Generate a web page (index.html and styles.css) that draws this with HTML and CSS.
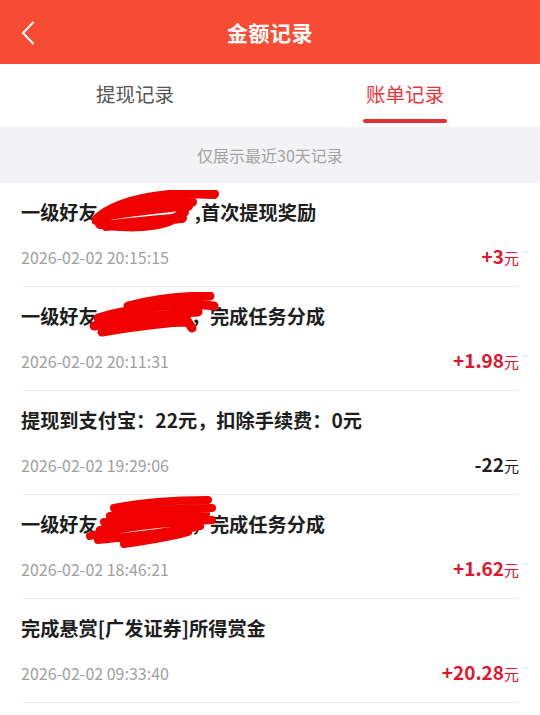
FILE: index.html
```html
<!DOCTYPE html>
<html lang="zh-CN">
<head>
<meta charset="utf-8">
<title>金额记录</title>
<link rel="stylesheet" href="styles.css">
</head>
<body>
<div class="page">
  <header class="topbar">
    <svg class="back" width="14" height="24" viewBox="0 0 14 24"><path d="M12 1.5 L2 12 L12 22.5" fill="none" stroke="#fff" stroke-width="2" stroke-linecap="round" stroke-linejoin="round"/></svg>
    <h1 class="title">金额记录</h1>
  </header>
  <nav class="tabs">
    <div class="tab">提现记录</div>
    <div class="tab active">账单记录</div>
  </nav>
  <div class="notice">仅展示最近30天记录</div>
  <ul class="list">
    <li class="item">
      <div class="desc">一级好友<span class="mask m1"><svg class="scribble" width="130" height="44" viewBox="0 0 130 44"><path d="M6 28 C30 8 80 2 122 4 M4 30 C40 16 80 12 100 12 M8 34 C50 40 80 34 92 22 M10 26 C50 20 80 16 96 16 M14 36 C40 32 70 30 90 28" fill="none" stroke="#f10000" stroke-width="10" stroke-linecap="round"/></svg></span>,首次提现奖励</div>
      <div class="meta"><span class="time">2026-02-02 20:15:15</span><span class="amt plus">+3<small>元</small></span></div>
    </li>
    <li class="item">
      <div class="desc">一级好友<span class="mask m2"><svg class="scribble" width="136" height="50" viewBox="0 0 136 50"><path d="M40 14 C70 6 100 4 122 4 M10 26 C50 14 100 10 126 14 M6 34 C40 26 80 22 110 20 M14 40 C50 34 80 30 100 30 L104 36 M20 30 C50 24 80 24 100 22" fill="none" stroke="#f10000" stroke-width="9" stroke-linecap="round"/></svg></span>，完成任务分成</div>
      <div class="meta"><span class="time">2026-02-02 20:11:31</span><span class="amt plus">+1.98<small>元</small></span></div>
    </li>
    <li class="item">
      <div class="desc">提现到支付宝：22元，扣除手续费：0元</div>
      <div class="meta"><span class="time">2026-02-02 19:29:06</span><span class="amt minus">-22<small>元</small></span></div>
    </li>
    <li class="item">
      <div class="desc">一级好友<span class="mask m4"><svg class="scribble" width="140" height="54" viewBox="0 0 140 54"><path d="M30 12 C60 6 100 4 124 4 M26 20 C60 14 100 12 128 12 M20 26 C60 20 100 20 122 18 M6 40 C40 30 90 26 128 24 M14 44 C50 40 90 36 116 30 M40 48 C70 44 90 40 104 36 M16 34 C50 28 90 26 110 26" fill="none" stroke="#f10000" stroke-width="8" stroke-linecap="round"/></svg></span>，完成任务分成</div>
      <div class="meta"><span class="time">2026-02-02 18:46:21</span><span class="amt plus">+1.62<small>元</small></span></div>
    </li>
    <li class="item">
      <div class="desc">完成悬赏[广发证券]所得赏金</div>
      <div class="meta"><span class="time">2026-02-02 09:33:40</span><span class="amt plus">+20.28<small>元</small></span></div>
    </li>
  </ul>
</div>
</body>
</html>
```
FILE: styles.css
```css
* { box-sizing: border-box; }
html, body { margin: 0; padding: 0; background: #fff; }
body {
  font-family: "Noto Sans CJK SC", "Noto Sans", sans-serif;
  width: 540px;
  height: 715px;
  overflow: hidden;
}
.page { width: 540px; }
.topbar {
  height: 64px;
  background: #f64c33;
  display: flex;
  align-items: center;
  justify-content: center;
  position: relative;
}
.back {
  position: absolute;
  left: 21px;
  top: 21px;
}
.title {
  margin: 0;
  color: #fff;
  font-size: 21px;
  font-weight: 700;
  letter-spacing: 0.5px;
}
.tabs {
  height: 63px;
  display: flex;
  background: #fff;
}
.tab {
  flex: 1;
  display: flex;
  align-items: center;
  justify-content: center;
  font-size: 19.5px;
  color: #555;
  position: relative;
  padding-bottom: 4px;
}
.tab.active { color: #e8353b; }
.tab.active::after {
  content: "";
  position: absolute;
  left: 50%;
  margin-left: -42px;
  width: 84px;
  height: 4px;
  border-radius: 2px;
  bottom: 4px;
  background: #e63232;
}
.notice {
  height: 56px;
  background: #f3f3f6;
  color: #a3a3a3;
  font-size: 16px;
  display: flex;
  align-items: center;
  justify-content: center;
}
.list { list-style: none; margin: 0; padding: 0; }
.item {
  margin: 0 21px;
  padding: 17px 0 18px;
  border-bottom: 1px solid #eeeeee;
}
.desc {
  font-size: 19.2px;
  line-height: 24px;
  height: 24px;
  font-weight: 700;
  color: #1e1e1e;
  margin-bottom: 20px;
  white-space: nowrap;
}
.mask {
  display: inline-block;
  position: relative;
  height: 24px;
  vertical-align: top;
}
.m1 { width: 97px; }
.m2 { width: 93px; }
.m4 { width: 93px; }
.scribble { position: absolute; }
.m1 .scribble { left: -6px; top: -10px; }
.m2 .scribble { left: -10px; top: -12px; }
.m4 .scribble { left: -14px; top: -16px; }
.meta {
  display: flex;
  justify-content: space-between;
  align-items: baseline;
  height: 24px;
  line-height: 24px;
}
.time { font-size: 16px; color: #a0a0a0; }
.amt { font-size: 19px; font-weight: 700; }
.amt small { font-size: 15px; font-weight: 400; }
.plus { color: #e2142b; }
.minus { color: #1e1e1e; }
```
